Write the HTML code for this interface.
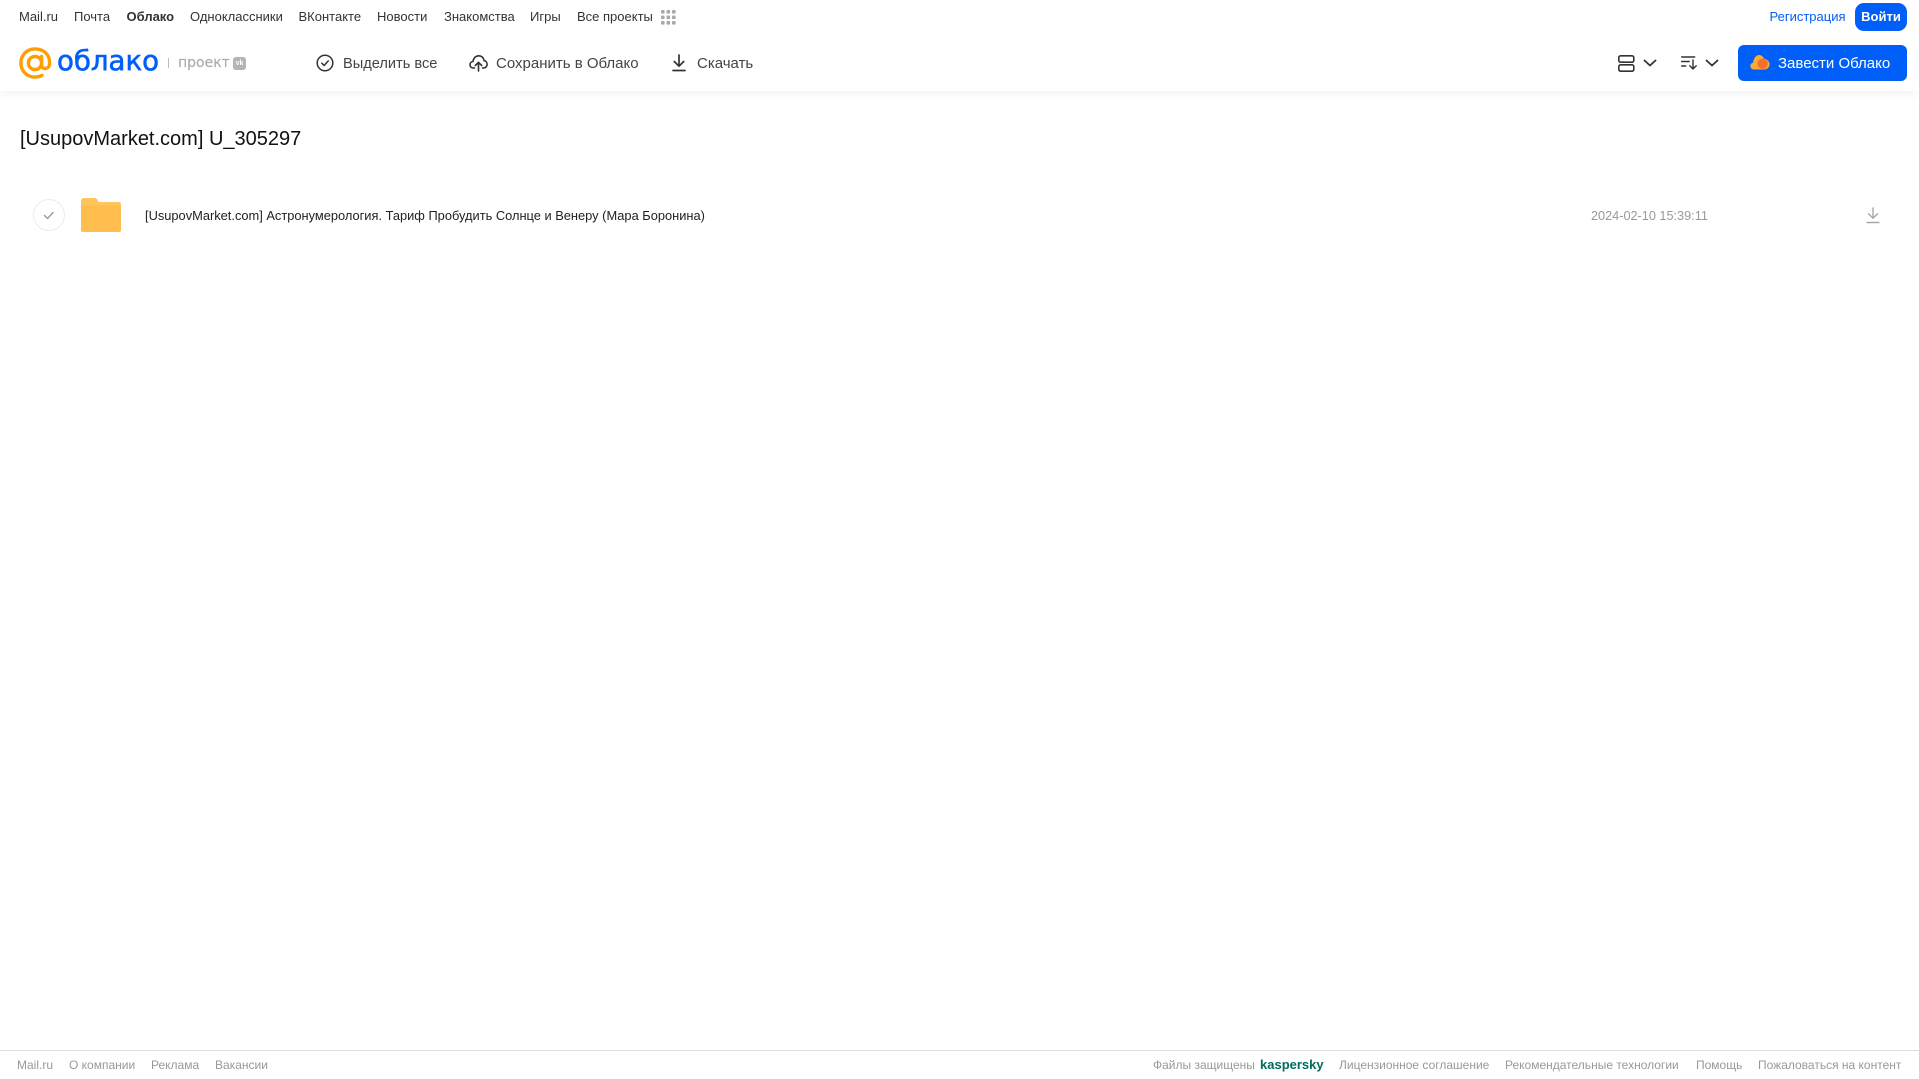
<!DOCTYPE html>
<html lang="ru"><head><meta charset="utf-8"><title>Облако</title>
<style>
html,body{margin:0;padding:0;background:#fff;width:1919px;height:1079px;overflow:hidden;font-family:"Liberation Sans",Arial,sans-serif}
.t{position:absolute;white-space:nowrap;line-height:1}
.n{font-size:13px;color:#333;top:10px}
.a{font-size:15px;color:#444;top:56px}
.f{font-size:12px;color:#999;top:1059px}
svg{position:absolute;overflow:visible}
#hdr{position:absolute;left:0;top:0;width:1919px;height:91px;background:#fff;box-shadow:0 1px 10px rgba(0,0,0,.07)}
</style></head><body>
<div id="hdr"></div>
<span class="t n" style="left:19px">Mail.ru</span>
<span class="t n" style="left:74px">Почта</span>
<span class="t n" style="left:126.500px;font-weight:700">Облако</span>
<span class="t n" style="left:190px">Одноклассники</span>
<span class="t n" style="left:298.500px">ВКонтакте</span>
<span class="t n" style="left:377px">Новости</span>
<span class="t n" style="left:444px">Знакомства</span>
<span class="t n" style="left:530px">Игры</span>
<span class="t n" style="left:577px">Все проекты</span>
<svg style="left:661px;top:10px" width="15" height="15" fill="#a8a8a8"><rect x="0" y="0" width="3.6" height="3.6" rx="1"/><rect x="5.5" y="0" width="3.6" height="3.6" rx="1"/><rect x="11" y="0" width="3.6" height="3.6" rx="1"/><rect x="0" y="5.5" width="3.6" height="3.6" rx="1"/><rect x="5.5" y="5.5" width="3.6" height="3.6" rx="1"/><rect x="11" y="5.5" width="3.6" height="3.6" rx="1"/><rect x="0" y="11" width="3.6" height="3.6" rx="1"/><rect x="5.5" y="11" width="3.6" height="3.6" rx="1"/><rect x="11" y="11" width="3.6" height="3.6" rx="1"/></svg>

<svg style="left:19px;top:47px" width="33" height="33" viewBox="0 0 33 33" fill="none" stroke="#ff9e00" stroke-width="3.4"><circle cx="16" cy="16" r="6.6"/><path d="M22.6 9.5v8.5c0 5 7.6 5 8-1.5C31 7.500 24.500 1.900 16 1.900 8 1.900 1.900 8 1.900 16S8 30.100 16 30.100c2.800 0 5-.6 7-1.700" stroke-linecap="round"/></svg>
<span class="t" style="left:57px;top:47px;font-family:'DejaVu Sans',sans-serif;font-size:27.600px;color:#005ff9;-webkit-text-stroke:.6px #005ff9">облако</span>
<div style="position:absolute;left:168px;top:58px;width:1px;height:10px;background:#bbb"></div>
<span class="t" style="left:178px;top:56px;font-family:'DejaVu Sans',sans-serif;font-size:14px;color:#adadad;-webkit-text-stroke:.2px #adadad">проект</span>
<div style="position:absolute;left:233px;top:57px;width:13px;height:13px;border-radius:3px;background:#b4b4b4"></div>
<span class="t" style="left:234px;top:60px;font-size:7px;font-weight:700;color:#fff;width:11px;text-align:center">vk</span>

<svg style="left:316px;top:54px" width="18" height="18" viewBox="0 0 18 18" fill="none" stroke="#333" stroke-width="1.5"><circle cx="9" cy="9" r="7.800"/><path d="M5.800 9.200l2.300 2.300 4.200-4.600" stroke-linecap="round" stroke-linejoin="round"/></svg>
<span class="t a" style="left:343px;top:57px;font-size:14.600px">Выделить все</span>
<svg style="left:469px;top:54px" width="19" height="18" viewBox="0 0 19 18" fill="none" stroke="#333" stroke-width="1.6" stroke-linecap="round" stroke-linejoin="round"><path d="M5.500 14H4.300C2.300 14 1 12.500 1 10.800 1 9 2.300 7.700 4 7.500 4.500 4 6.800 1.800 9.700 1.800c2.900 0 5 2 5.400 4.800 1.700.3 3 1.800 3 3.700 0 2-1.500 3.700-3.600 3.700h-1"/><path d="M9.500 17V8.500M6.300 11.500l3.200-3.200 3.200 3.200"/></svg>
<span class="t a" style="left:496px">Сохранить в Облако</span>
<svg style="left:671px;top:54px" width="16" height="18" viewBox="0 0 16 18" fill="none" stroke="#333" stroke-width="1.700" stroke-linecap="round" stroke-linejoin="round"><path d="M8 1v11M3.300 7.500L8 12.200l4.700-4.700"/><path d="M2 16.500h12"/></svg>
<span class="t a" style="left:697px">Скачать</span>

<svg style="left:1618px;top:55px" width="17" height="17" viewBox="0 0 17 17" fill="none" stroke="#333" stroke-width="1.600"><rect x=".8" y=".8" width="15" height="6.400" rx="1.800"/><rect x=".8" y="9.800" width="15" height="6.400" rx="1.800"/></svg>
<svg style="left:1643px;top:59px" width="14" height="8" viewBox="0 0 14 8" fill="none" stroke="#333" stroke-width="1.800" stroke-linecap="round" stroke-linejoin="round"><path d="M1.500 1.500L7 6.500l5.500-5"/></svg>
<svg style="left:1681px;top:56px" width="17" height="14" viewBox="0 0 17 14" fill="none" stroke="#333" stroke-width="1.400" stroke-linecap="round" stroke-linejoin="round"><path d="M.7 1h13M.7 5.500h7.500M.7 10h4M12 4v9M8.800 9.800l3.200 3.200 3.200-3.200"/></svg>
<svg style="left:1705px;top:59px" width="14" height="8" viewBox="0 0 14 8" fill="none" stroke="#333" stroke-width="1.800" stroke-linecap="round" stroke-linejoin="round"><path d="M1.500 1.500L7 6.500l5.500-5"/></svg>

<span class="t n" style="left:1769.500px;color:#005ff9">Регистрация</span>
<div style="position:absolute;left:1855px;top:3px;width:52px;height:28px;background:#005ff9;border-radius:9px"></div>
<span class="t" style="left:1855px;top:10px;width:52px;text-align:center;font-size:13px;font-weight:700;color:#fff">Войти</span>
<div style="position:absolute;left:1738px;top:45px;width:169px;height:36px;background:#005ff9;border-radius:6px"></div>
<svg style="left:1750px;top:54px" width="20" height="17" viewBox="0 0 20 17"><path d="M4 15.500C1.800 15.500.4 13.800.4 12c0-1.800 1.200-3 2.800-3.400C3.600 4 6.200 1 9 1c2.400 0 4.300 1.600 5 3.800 3 .2 5.500 2.600 5.500 5.500 0 3-2.300 5.200-5.200 5.200z" fill="#ffa930"/><circle cx="12.600" cy="9.800" r="5.200" fill="#f6702c"/></svg>
<span class="t" style="left:1778px;top:56px;font-size:15px;color:#fff">Завести Облако</span>

<span class="t" style="left:20px;top:128.500px;font-size:20px;color:#111">[UsupovMarket.com] U_305297</span>

<svg style="left:33px;top:199px" width="32" height="32" viewBox="0 0 32 32" fill="none"><circle cx="16" cy="16" r="15.500" stroke="#ececec"/><path d="M11.500 16.500l3 3 5.500-6" stroke="#9a9a9a" stroke-width="1.400" stroke-linecap="round" stroke-linejoin="round"/></svg>
<svg style="left:81px;top:198px" width="40" height="34" viewBox="0 0 40 34"><path d="M0 3C0 1.300 1.300 0 3 0h10c1.800 0 3 .8 3.800 2.200L17.500 4H37.500C38.900 4 40 5.100 40 6.500V31c0 1.700-1.300 3-3 3H3c-1.700 0-3-1.300-3-3z" fill="#ffc45a"/><rect y="7" width="40" height="27" rx="2" fill="#ffbe4d"/></svg>
<span class="t" style="left:145px;top:210px;font-size:12.850px;color:#222">[UsupovMarket.com] Астронумерология. Тариф Пробудить Солнце и Венеру (Мара Боронина)</span>
<span class="t" style="left:1591px;top:210px;font-size:12.700px;color:#999">2024-02-10 15:39:11</span>
<svg style="left:1866px;top:207px" width="14" height="17" viewBox="0 0 14 17" fill="none" stroke="#a8a8a8" stroke-width="1.400" stroke-linecap="round" stroke-linejoin="round"><path d="M7 1v10M2.500 6.800L7 11.300l4.500-4.500"/><path d="M1 15.500h12"/></svg>

<div style="position:absolute;left:0;top:1050px;width:1919px;height:1px;background:#dcdcdc"></div>
<span class="t f" style="left:17px">Mail.ru</span>
<span class="t f" style="left:69px">О компании</span>
<span class="t f" style="left:151px">Реклама</span>
<span class="t f" style="left:215px">Вакансии</span>
<span class="t f" style="left:1153px">Файлы защищены</span>
<span class="t f" style="left:1260px;color:#006d5c;font-weight:700;font-size:13px;top:1058px">kaspersky</span>
<span class="t f" style="left:1339px">Лицензионное соглашение</span>
<span class="t f" style="left:1505px">Рекомендательные технологии</span>
<span class="t f" style="left:1696px">Помощь</span>
<span class="t f" style="left:1758px">Пожаловаться на контент</span>
</body></html>
